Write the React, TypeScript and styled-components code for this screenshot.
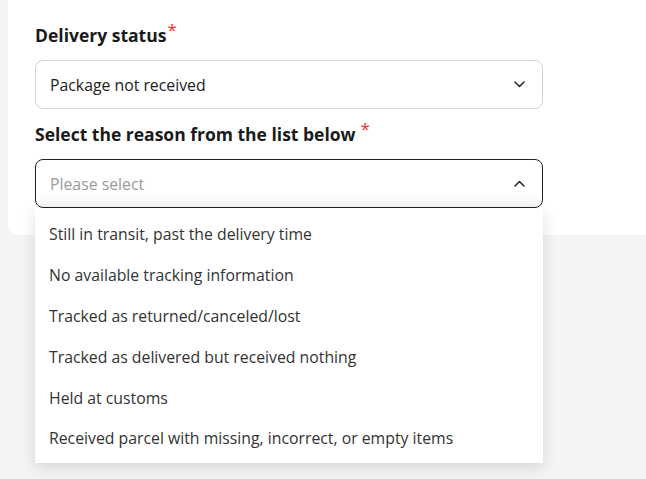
import React from "react";
import styled, { createGlobalStyle } from "styled-components";

const GlobalStyle = createGlobalStyle`
  html, body {
    margin: 0;
    padding: 0;
    background: #f4f4f4;
    font-family: "Open Sans", "Noto Sans", sans-serif;
  }
`;

const reasons = [
  "Still in transit, past the delivery time",
  "No available tracking information",
  "Tracked as returned/canceled/lost",
  "Tracked as delivered but received nothing",
  "Held at customs",
  "Received parcel with missing, incorrect, or empty items",
];

const Page = styled.div`
  min-height: 479px;
  padding-left: 8px;
  overflow: hidden;
`;

const Card = styled.div`
  background: #fff;
  border-radius: 0 0 0 10px;
  padding: 23px 0 27px 27px;
  width: 700px;
`;

const Field = styled.div`
  width: 508px;
  position: relative;
`;

const Label = styled.div<{ $top?: number }>`
  font-size: 17.5px;
  font-weight: 700;
  color: #1a1a1a;
  line-height: 24px;
  margin: ${(p) => p.$top ?? 0}px 0 13px;
`;

const Star = styled.sup<{ $gap?: boolean }>`
  color: #f5331e;
  font-size: 17px;
  font-weight: 400;
  position: relative;
  top: 1px;
  margin-left: ${(p) => (p.$gap ? "5px" : "1px")};
  line-height: 0;
`;

const Select = styled.div<{ $open?: boolean }>`
  box-sizing: border-box;
  height: 49px;
  border: 1px solid ${(p) => (p.$open ? "#222" : "#d3d3d3")};
  border-radius: 8px;
  display: flex;
  align-items: center;
  justify-content: space-between;
  padding: 0 17px 0 14px;
  background: ${(p) => (p.$open ? "linear-gradient(#fff 70%, #f6f6f6)" : "#fff")};
`;

const Value = styled.span<{ $placeholder?: boolean }>`
  font-size: 15.8px;
  color: ${(p) => (p.$placeholder ? "#9a9a9a" : "#222")};
`;

const Menu = styled.div`
  position: absolute;
  left: 0;
  right: 0;
  top: 100%;
  background: #fff;
  padding: 6px 0 4px;
  box-shadow: 0 4px 14px rgba(0, 0, 0, 0.13);
  z-index: 2;
`;

const Option = styled.div`
  height: 40.8px;
  display: flex;
  align-items: center;
  padding-left: 14px;
  font-size: 15.8px;
  color: #333;
`;

const Chevron = ({ up }: { up?: boolean }) => (
  <svg width="11" height="7" viewBox="0 0 11 7" fill="none">
    <path
      d={up ? "M1 6 L5.5 1.5 L10 6" : "M1 1 L5.5 5.5 L10 1"}
      stroke="#2a2a2a"
      strokeWidth="1.6"
      strokeLinecap="round"
      strokeLinejoin="round"
    />
  </svg>
);

export default function App() {
  return (
    <Page>
      <GlobalStyle />
      <Card>
        <Label>
          Delivery status<Star>*</Star>
        </Label>
        <Field>
          <Select>
            <Value>Package not received</Value>
            <Chevron />
          </Select>
        </Field>
        <Label $top={13}>
          Select the reason from the list below<Star $gap>*</Star>
        </Label>
        <Field>
          <Select $open>
            <Value $placeholder>Please select</Value>
            <Chevron up />
          </Select>
          <Menu>
            {reasons.map((r) => (
              <Option key={r}>{r}</Option>
            ))}
          </Menu>
        </Field>
      </Card>
    </Page>
  );
}
